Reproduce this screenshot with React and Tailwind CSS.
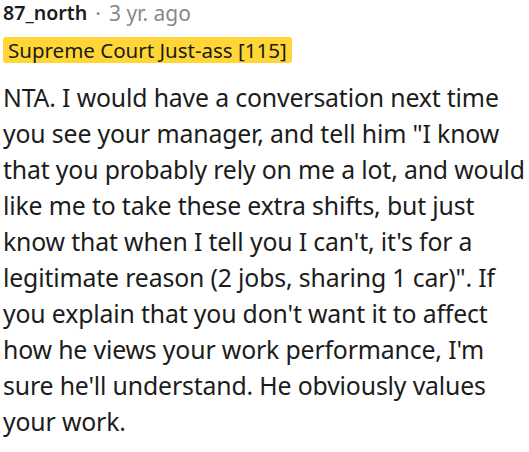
export default function App() {
  return (
    <div className="w-[529px] h-[452px] bg-white overflow-hidden pl-[3px]" style={{ fontFamily: '"Noto Sans", sans-serif' }}>
      <div className="flex items-center leading-[26px]">
        <span className="text-[19.6px] font-semibold text-[#1c1c1c]">87_north</span>
        <span className="text-[21px] text-[#878a8c] ml-[8px]">·</span>
        <span className="text-[21px] text-[#878a8c] ml-[8px]">3 yr. ago</span>
      </div>
      <div className="mt-[11px] flex">
        <span className="bg-[#ffd635] text-[#1a1a1b] rounded-[3px] px-[5px] text-[20.5px] leading-[26px]">
          Supreme Court Just-ass [115]
        </span>
      </div>
      <p className="mt-[16px] text-[24.8px] leading-[36px] tracking-[-0.15px] text-[#1c1c1c]">
        NTA. I would have a conversation next time you see your manager, and tell him "I know that you probably rely on me a lot, and would like me to take these extra shifts, but just know that when I tell you I can't, it's for a legitimate reason (2 jobs, sharing 1 car)". If you explain that you don't want it to affect how he views your work performance, I'm sure he'll understand. He obviously values your work.
      </p>
    </div>
  );
}
